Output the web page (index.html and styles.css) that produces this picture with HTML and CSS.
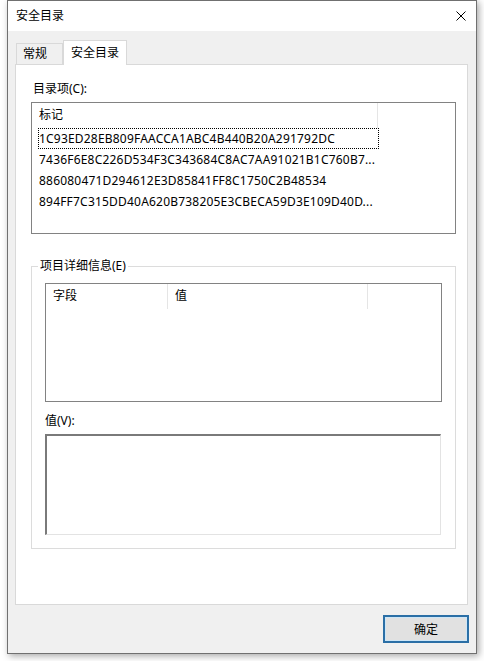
FILE: index.html
```html
<!DOCTYPE html>
<html lang="zh-CN">
<head>
<meta charset="utf-8">
<title>安全目录</title>
<link rel="stylesheet" href="styles.css">
</head>
<body>
<div class="window">
  <div class="titlebar">
    <span class="title">安全目录</span>
    <svg class="close" width="10" height="10" viewBox="0 0 10 10"><path d="M0.5 0.5 L9.5 9.5 M9.5 0.5 L0.5 9.5" stroke="#000" stroke-width="1" fill="none"/></svg>
  </div>
  <div class="client">
    <div class="tabs">
      <div class="tab">常规</div>
      <div class="tab active">安全目录</div>
    </div>
    <div class="panel">
      <div class="label">目录项(C):</div>
      <div class="listbox">
        <div class="lhead">
          <div class="hcol hcol-main">标记</div>
        </div>
        <div class="rows">
          <div class="row focus">1C93ED28EB809FAACCA1ABC4B440B20A291792DC</div>
          <div class="row">7436F6E8C226D534F3C343684C8AC7AA91021B1C760B7...</div>
          <div class="row">886080471D294612E3D85841FF8C1750C2B48534</div>
          <div class="row">894FF7C315DD40A620B738205E3CBECA59D3E109D40D...</div>
        </div>
      </div>
      <fieldset class="group">
        <legend>项目详细信息(E)</legend>
        <div class="detail">
          <div class="lhead">
            <div class="hcol hcol-field">字段</div>
            <div class="hcol hcol-value">值</div>
          </div>
        </div>
        <div class="label vlabel">值(V):</div>
        <div class="valuebox"></div>
      </fieldset>
    </div>
    <div class="buttons">
      <button class="btn">确定</button>
    </div>
  </div>
</div>
</body>
</html>
```
FILE: styles.css
```css
* { box-sizing: border-box; }
html, body { margin: 0; padding: 0; background: #ffffff; }
body {
  font-family: "Noto Sans", "Noto Sans CJK SC", sans-serif;
  font-size: 12px;
  color: #000;
  width: 484px;
  height: 661px;
  overflow: hidden;
}
.window {
  margin-left: 7px;
  width: 470px;
  height: 654px;
  border: 1px solid #707070;
  background: #f0f0f0;
  box-shadow: 2px 2px 7px rgba(0,0,0,0.35);
}
.titlebar {
  height: 30px;
  background: #ffffff;
  display: flex;
  align-items: center;
  justify-content: space-between;
  padding: 0 10px 0 8px;
  line-height: 16px;
}
.title { font-size: 12px; }
.close { display: block; }
.client {
  padding: 9px 8px 0 7px;
}
.tabs {
  display: flex;
  align-items: flex-end;
  height: 24px;
  padding-left: 1px;
}
.tab {
  height: 21px;
  width: 47px;
  border: 1px solid #d9d9d9;
  border-bottom: none;
  background: #f0f0f0;
  padding-left: 6px;
  line-height: 20px;
}
.tab.active {
  position: relative;
  z-index: 1;
  height: 25px;
  width: 64px;
  margin-bottom: -1px;
  background: #ffffff;
  padding-left: 0;
  text-align: center;
  line-height: 24px;
}
.panel {
  height: 541px;
  border: 1px solid #d9d9d9;
  background: #ffffff;
  padding: 16px 11px 0 15px;
}
.label {
  height: 16px;
  line-height: 16px;
  padding-left: 2px;
  margin-bottom: 5px;
}
.listbox {
  height: 132px;
  border: 1px solid #828282;
  background: #fff;
}
.lhead {
  display: flex;
  height: 25px;
}
.hcol {
  height: 25px;
  line-height: 23px;
  padding-left: 7px;
  border-right: 1px solid #e5e5e5;
}
.hcol-main { width: 346px; }
.rows { padding-left: 6px; }
.row {
  width: 341px;
  height: 21px;
  line-height: 19px;
  padding-left: 0;
  letter-spacing: 0.2px;
  border: 1px solid transparent;
  white-space: nowrap;
  overflow: hidden;
}
.row.focus { border: 1px dotted #000; }
.group {
  margin: 24px 0 0 0;
  padding: 0 13px 13px 13px;
  border: 1px solid #dcdcdc;
  min-width: 0;
}
.group legend {
  margin-left: -7px;
  padding: 0 2px;
  line-height: 16px;
  height: 16px;
}
.detail {
  margin-top: 9px;
  height: 119px;
  border: 1px solid #828282;
  background: #fff;
}
.hcol-field { width: 122px; }
.hcol-value { width: 200px; }
.vlabel {
  margin-top: 11px;
  padding-left: 0;
}
.valuebox {
  height: 101px;
  width: 396px;
  border-style: solid;
  border-width: 2px 1px 1px 2px;
  border-color: #7a7a7a #e3e3e3 #e3e3e3 #7a7a7a;
  background: #fff;
}
.buttons {
  display: flex;
  justify-content: flex-end;
  padding-top: 10px;
  margin-right: -1px;
}
.btn {
  width: 86px;
  height: 28px;
  border: 2px solid #2b6fa6;
  box-shadow: inset 0 0 0 1px #cde6f7;
  background: #e1e1e1;
  font-family: "Noto Sans", "Noto Sans CJK SC", sans-serif;
  font-size: 12px;
  color: #000;
  padding: 0;
}
```
